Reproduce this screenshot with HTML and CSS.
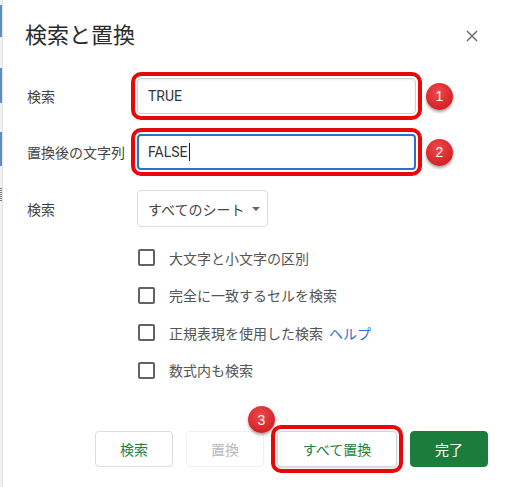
FILE: index.html
```html
<!DOCTYPE html>
<html lang="ja">
<head>
<meta charset="utf-8">
<title>検索と置換</title>
<link rel="stylesheet" href="styles.css">
</head>
<body>
<div class="page">
  <div class="sheet-edge">
    <span class="sel s1"></span>
    <span class="sel s2"></span>
    <span class="sel s3"></span>
    <span class="dots"></span>
  </div>
  <div class="dialog">
    <div class="head">
      <h1 class="title">検索と置換</h1>
      <span class="close" aria-label="閉じる">
        <svg width="12" height="12" viewBox="0 0 12 12"><path d="M1 1L11 11M11 1L1 11" stroke="#6b6f73" stroke-width="1.5" fill="none"/></svg>
      </span>
    </div>

    <div class="row row-input">
      <div class="label">検索</div>
      <div class="field hl"><span class="value">TRUE</span></div>
      <span class="badge">1</span>
    </div>

    <div class="row row-input">
      <div class="label">置換後の文字列</div>
      <div class="field focus hl"><span class="value">FALSE</span><span class="caret"></span></div>
      <span class="badge">2</span>
    </div>

    <div class="row row-select">
      <div class="label">検索</div>
      <div class="select"><span>すべてのシート</span><span class="arrow"></span></div>
    </div>

    <div class="checks">
      <div class="check"><span class="box"></span><span class="ctext">大文字と小文字の区別</span></div>
      <div class="check"><span class="box"></span><span class="ctext">完全に一致するセルを検索</span></div>
      <div class="check"><span class="box"></span><span class="ctext">正規表現を使用した検索</span><span class="help">ヘルプ</span></div>
      <div class="check"><span class="box"></span><span class="ctext">数式内も検索</span></div>
    </div>

    <div class="actions">
      <div class="btn">検索</div>
      <div class="btn disabled">置換</div>
      <div class="btn-wrap">
        <div class="btn wide hl">すべて置換</div>
        <span class="badge badge-over">3</span>
      </div>
      <div class="btn primary">完了</div>
    </div>
  </div>
</div>
</body>
</html>
```

FILE: styles.css
```css
* { box-sizing: border-box; }

html, body {
  margin: 0;
  padding: 0;
  background: #fff;
}

body {
  font-family: Roboto, "Noto Sans CJK JP", sans-serif;
  color: #444;
}

.page {
  display: flex;
  width: 512px;
  height: 487px;
  overflow: hidden;
}

.sheet-edge {
  position: relative;
  width: 3px;
  flex: none;
  background: #f1f1f1;
  border-right: 1px solid #e4e4e4;
}

.sel {
  position: absolute;
  left: 0;
  width: 2px;
  background: #5b8ec9;
}
.s1 { top: 5px; height: 32px; }
.s2 { top: 68px; height: 35px; }
.s3 { top: 132px; height: 34px; }
.dots {
  position: absolute;
  left: 0;
  top: 188px;
  width: 2px;
  height: 14px;
  background: repeating-linear-gradient(#777 0 1px, transparent 1px 2px);
}

.dialog {
  flex: 1;
  padding: 22px 24px 0 22px;
}

.head {
  display: flex;
  align-items: center;
  justify-content: space-between;
  height: 28px;
}

.title {
  margin: 0;
  font-size: 22px;
  font-weight: 400;
  line-height: 28px;
  color: #2b2b2b;
}

.close {
  display: flex;
  margin-right: 10px;
}

.row {
  display: grid;
  grid-template-columns: 112px 279px auto;
  align-items: center;
}

.row-input { height: 36px; margin-top: 20px; }
.row-input:first-of-type { margin-top: 28px; }
.head + .row { margin-top: 28px; }

.row-select { height: 37px; margin-top: 20px; }

.label {
  padding-left: 2px;
  font-size: 14px;
  color: #444;
  white-space: nowrap;
}

.field {
  height: 36px;
  display: flex;
  align-items: center;
  padding-left: 10px;
  border: 1px solid #d0d0d0;
  border-radius: 4px;
  background: #fff;
  font-size: 14px;
  color: #333;
  box-shadow: inset 0 1px 2px rgba(0,0,0,0.08);
}

.field.focus {
  border: 2px solid #2f6fcb;
  padding-left: 9px;
  box-shadow: none;
}

.caret {
  width: 1px;
  height: 18px;
  background: #222;
  margin-left: 1px;
}

.hl {
  outline: 4px solid #e8080a;
  outline-offset: 2px;
  border-radius: 4px;
}

.badge {
  width: 27px;
  height: 27px;
  margin-left: 10px;
  border-radius: 50%;
  background: radial-gradient(circle at 45% 35%, #ec4a4c 0, #d9282c 60%, #b81a1e 100%);
  box-shadow: 0 2px 3px rgba(0,0,0,0.35);
  color: #fff;
  font-family: "Liberation Sans", Arial, sans-serif;
  font-size: 14px;
  display: flex;
  align-items: center;
  justify-content: center;
}

.select {
  width: 131px;
  height: 37px;
  display: flex;
  align-items: center;
  padding-left: 10px;
  border: 1px solid #dadce0;
  border-radius: 4px;
  font-size: 14px;
  color: #444;
}

.arrow {
  margin-left: 8px;
  width: 0;
  height: 0;
  border-left: 4px solid transparent;
  border-right: 4px solid transparent;
  border-top: 4px solid #666;
}

.checks {
  margin-top: 12px;
  padding-left: 113px;
}

.check {
  height: 37.5px;
  display: flex;
  align-items: center;
  font-size: 14px;
  color: #555;
}

.box {
  width: 17px;
  height: 17px;
  border: 2px solid #5f6368;
  border-radius: 2px;
  margin-right: 14px;
  flex: none;
}

.help {
  margin-left: 6px;
  color: #2f6fcb;
}

.actions {
  margin-top: 42px;
  display: flex;
  justify-content: flex-end;
  gap: 13px;
}

.btn {
  height: 36px;
  width: 78px;
  display: flex;
  align-items: center;
  justify-content: center;
  border: 1px solid #dadce0;
  border-radius: 4px;
  font-size: 14px;
  color: #24823e;
  background: #fff;
}

.btn.disabled {
  border-color: #f0f0f0;
  color: #b9b9b9;
}

.btn.wide {
  width: 120px;
  border-color: #d5d5d5;
  box-shadow: 0 1px 3px rgba(0,0,0,0.18);
}

.btn.primary {
  background: #1b7d3b;
  border-color: #1b7d3b;
  color: #fff;
}

.btn-wrap {
  position: relative;
}

.badge-over {
  position: absolute;
  left: -29px;
  top: -25px;
  margin: 0;
}
```
